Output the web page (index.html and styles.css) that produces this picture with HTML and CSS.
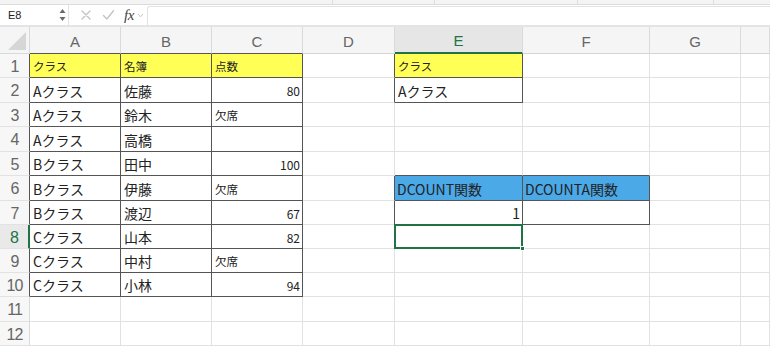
FILE: index.html
```html
<!DOCTYPE html>
<html lang="ja">
<head>
    <meta charset="UTF-8">
    <title>DCOUNT - Sheet</title>
    <link rel="stylesheet" href="styles.css">
</head>
<body>
    <div class="ribbon">
        <span class="tick t1"></span>
        <span class="tick t2"></span>
        <span class="tick t3"></span>
        <span class="tick t4"></span>
    </div>

    <div class="formula-bar">
        <div class="name-box">
            <span>E8</span>
            <svg class="spin" width="7" height="14" viewBox="0 0 7 14">
                <path d="M3.5 1L6.5 5H0.5Z" fill="#6b6b6b"/>
                <path d="M3.5 13L6.5 9H0.5Z" fill="#6b6b6b"/>
            </svg>
        </div>
        <div class="fx-tools">
            <svg width="12" height="12" viewBox="0 0 12 12">
                <path d="M2 2L10 10M10 2L2 10" stroke="#c4c4c4" stroke-width="1.4" stroke-linecap="round"/>
            </svg>
            <svg width="13" height="12" viewBox="0 0 13 12">
                <path d="M1.5 6.5L4.8 10L11.5 1.8" stroke="#c4c4c4" stroke-width="1.4" fill="none" stroke-linecap="round" stroke-linejoin="round"/>
            </svg>
            <span class="fx">fx</span>
            <svg width="7" height="5" viewBox="0 0 7 5">
                <path d="M1 1L3.5 3.8L6 1" stroke="#c4c4c4" stroke-width="1" fill="none"/>
            </svg>
        </div>
        <div class="formula-input"></div>
    </div>

    <div class="sheet">
        <div class="row head">
            <div class="corner"><span class="tri"></span></div>
            <div class="ch dk">A</div>
            <div class="ch dk">B</div>
            <div class="ch dk">C</div>
            <div class="ch">D</div>
            <div class="ch sel">E</div>
            <div class="ch">F</div>
            <div class="ch">G</div>
            <div class="ch"></div>
        </div>

        <div class="row h24">
            <div class="rh dk">1</div>
            <div class="c t yellow sm">クラス</div>
            <div class="c t yellow sm">名簿</div>
            <div class="c t yellow sm">点数</div>
            <div class="c edge"></div>
            <div class="c t yellow sm">クラス</div>
            <div class="c"></div>
            <div class="c"></div>
            <div class="c"></div>
        </div>
        <div class="row h25">
            <div class="rh dk">2</div>
            <div class="c t">Aクラス</div>
            <div class="c t">佐藤</div>
            <div class="c t num">80</div>
            <div class="c edge"></div>
            <div class="c t">Aクラス</div>
            <div class="c"></div>
            <div class="c"></div>
            <div class="c"></div>
        </div>
        <div class="row h24">
            <div class="rh dk">3</div>
            <div class="c t">Aクラス</div>
            <div class="c t">鈴木</div>
            <div class="c t sm">欠席</div>
            <div class="c"></div>
            <div class="c"></div>
            <div class="c"></div>
            <div class="c"></div>
            <div class="c"></div>
        </div>
        <div class="row h25">
            <div class="rh dk">4</div>
            <div class="c t">Aクラス</div>
            <div class="c t">高橋</div>
            <div class="c t"></div>
            <div class="c"></div>
            <div class="c"></div>
            <div class="c"></div>
            <div class="c"></div>
            <div class="c"></div>
        </div>
        <div class="row h24">
            <div class="rh dk">5</div>
            <div class="c t">Bクラス</div>
            <div class="c t">田中</div>
            <div class="c t num">100</div>
            <div class="c"></div>
            <div class="c above"></div>
            <div class="c above"></div>
            <div class="c"></div>
            <div class="c"></div>
        </div>
        <div class="row h25">
            <div class="rh dk">6</div>
            <div class="c t">Bクラス</div>
            <div class="c t">伊藤</div>
            <div class="c t sm">欠席</div>
            <div class="c edge"></div>
            <div class="c t blue">DCOUNT関数</div>
            <div class="c t blue">DCOUNTA関数</div>
            <div class="c"></div>
            <div class="c"></div>
        </div>
        <div class="row h24">
            <div class="rh dk">7</div>
            <div class="c t">Bクラス</div>
            <div class="c t">渡辺</div>
            <div class="c t num">67</div>
            <div class="c edge"></div>
            <div class="c t num big">1</div>
            <div class="c t"></div>
            <div class="c"></div>
            <div class="c"></div>
        </div>
        <div class="row h24">
            <div class="rh dk cur">8</div>
            <div class="c t">Cクラス</div>
            <div class="c t">山本</div>
            <div class="c t num">82</div>
            <div class="c"></div>
            <div class="c active"><span class="handle"></span></div>
            <div class="c"></div>
            <div class="c"></div>
            <div class="c"></div>
        </div>
        <div class="row h24">
            <div class="rh dk">9</div>
            <div class="c t">Cクラス</div>
            <div class="c t">中村</div>
            <div class="c t sm">欠席</div>
            <div class="c"></div>
            <div class="c"></div>
            <div class="c"></div>
            <div class="c"></div>
            <div class="c"></div>
        </div>
        <div class="row h24">
            <div class="rh dk">10</div>
            <div class="c t">Cクラス</div>
            <div class="c t">小林</div>
            <div class="c t num">94</div>
            <div class="c"></div>
            <div class="c"></div>
            <div class="c"></div>
            <div class="c"></div>
            <div class="c"></div>
        </div>
        <div class="row h25">
            <div class="rh">11</div>
            <div class="c"></div>
            <div class="c"></div>
            <div class="c"></div>
            <div class="c"></div>
            <div class="c"></div>
            <div class="c"></div>
            <div class="c"></div>
            <div class="c"></div>
        </div>
        <div class="row h24">
            <div class="rh">12</div>
            <div class="c"></div>
            <div class="c"></div>
            <div class="c"></div>
            <div class="c"></div>
            <div class="c"></div>
            <div class="c"></div>
            <div class="c"></div>
            <div class="c"></div>
        </div>
    </div>
</body>
</html>
```

FILE: styles.css
```css
* {
    margin: 0;
    padding: 0;
    box-sizing: border-box;
}

body {
    width: 770px;
    height: 346px;
    overflow: hidden;
    background: #fff;
    font-family: "Noto Sans CJK JP", "Noto Sans", sans-serif;
    color: #222;
}

/* top strip of the ribbon, cut off */
.ribbon {
    position: relative;
    height: 5px;
    background: #f4f4f4;
    border-bottom: 1px solid #dcdcdc;
}

.tick {
    position: absolute;
    top: 0;
    width: 1px;
    height: 4px;
    background: #dedede;
}

.t1 { left: 332px; }
.t2 { left: 434px; }
.t3 { left: 577px; }
.t4 { left: 713px; }

.formula-bar {
    display: flex;
    height: 22px;
    border-bottom: 2px solid #e4e4e4;
    background: #fff;
}

.name-box {
    width: 69px;
    display: flex;
    align-items: center;
    justify-content: space-between;
    padding: 0 2px 0 8px;
    border-right: 1px solid #e2e2e2;
    font-family: "Liberation Sans", Arial, sans-serif;
    font-size: 11px;
    color: #222;
}

.fx-tools {
    width: 78px;
    display: flex;
    align-items: center;
    gap: 10px;
    padding-left: 11px;
}

.fx {
    font-family: "Liberation Serif", "DejaVu Serif", serif;
    font-style: italic;
    font-size: 15px;
    color: #444;
    margin-left: -1px;
    margin-right: -7px;
    letter-spacing: -0.5px;
}

.formula-input {
    flex: 1;
    border: 1px solid #e2e2e2;
    border-right: none;
    border-bottom: none;
    border-radius: 3px 0 0 0;
    margin-top: 1px;
}

/* grid */
.row {
    display: grid;
    grid-template-columns: 30px 91px 91px 91px 92px 128px 127px 91px 1fr;
}

.h24 { height: 24px; }
.h25 { height: 25px; }

.head {
    height: 27px;
    background: #f5f5f5;
}

.corner {
    position: relative;
    border-right: 1px solid #d9d9d9;
    border-bottom: 1px solid #d9d9d9;
}

.tri {
    position: absolute;
    right: 3px;
    bottom: 3px;
    width: 0;
    height: 0;
    border-left: 18px solid transparent;
    border-bottom: 18px solid #d6d6d6;
}

.ch {
    display: flex;
    align-items: center;
    justify-content: center;
    padding-top: 2px;
    border-right: 1px solid #dadada;
    border-bottom: 1px solid #d4d4d4;
    font-family: "Liberation Sans", Arial, sans-serif;
    font-size: 15px;
    color: #666;
}

.ch.dk {
    border-bottom-color: #555;
}

.ch.sel {
    background: #e6e6e6;
    color: #217346;
    border-bottom: 2px solid #217346;
}

.rh {
    display: flex;
    align-items: center;
    justify-content: center;
    padding-top: 2px;
    background: #f7f7f7;
    border-right: 1px solid #d9d9d9;
    border-bottom: 1px solid #e2e2e2;
    font-family: "Liberation Sans", Arial, sans-serif;
    font-size: 16px;
    letter-spacing: -1px;
    color: #666;
}

.rh.dk {
    border-right-color: #555;
}

.rh.cur {
    background: #e9e9e9;
    color: #217346;
    border-right: 2px solid #217346;
}

.c {
    display: flex;
    align-items: center;
    padding: 1px 2px 0 3px;
    border-right: 1px solid #e1e1e1;
    border-bottom: 1px solid #e1e1e1;
    font-size: 14px;
    white-space: nowrap;
    overflow: hidden;
}

.c.t {
    border-right-color: #555;
    border-bottom-color: #555;
}

.c.edge {
    border-right-color: #555;
}

.c.above {
    border-bottom-color: #555;
}

.sm {
    font-size: 11.5px;
}

.num {
    justify-content: flex-end;
    font-size: 12px;
    padding-right: 2px;
}

.num.big {
    font-size: 14px;
}

.yellow {
    background: #ffff55;
}

.blue {
    background: #4ba9e8;
    padding-left: 2px;
}

.active {
    position: relative;
    overflow: visible;
}

.active::after {
    content: '';
    position: absolute;
    left: -1px;
    top: -1px;
    right: -1px;
    bottom: -1px;
    border: 2px solid #217346;
}

.handle {
    position: absolute;
    right: -3px;
    bottom: -3px;
    width: 5px;
    height: 5px;
    background: #217346;
    border: 1px solid #fff;
    z-index: 1;
}
```
